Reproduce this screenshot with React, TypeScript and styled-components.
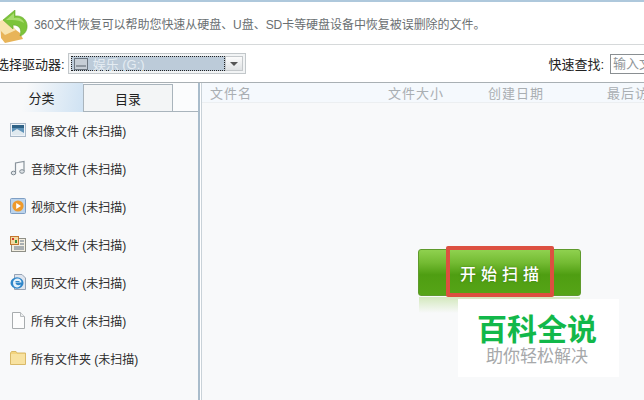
import React from 'react';
import styled, { createGlobalStyle } from 'styled-components';

const GlobalStyle = createGlobalStyle`
    html, body {
        margin: 0;
        padding: 0;
        background: #fff;
        font-family: "Liberation Sans", "Noto Sans CJK SC", sans-serif;
    }
`;

const Page = styled.div`
    position: relative;
    width: 644px;
    height: 400px;
    overflow: hidden;
    display: flex;
    flex-direction: column;
    background: #fff;
    border-top: 2px solid #aec8dc;
    box-sizing: border-box;
`;

const Banner = styled.div`
    height: 42px;
    flex: none;
    display: flex;
    align-items: center;
    gap: 6px;
    border-bottom: 1px solid #d6d9da;
    font-size: 12px;
    letter-spacing: -0.05px;
    color: #6a6f72;
    & > svg {
        align-self: flex-end;
    }
`;

const Toolbar = styled.div`
    height: 37px;
    flex: none;
    display: flex;
    align-items: center;
    margin-left: -4px;
    font-size: 13px;
    color: #222;
    border-bottom: 1px solid #a9b0b4;
`;

const DriveSelect = styled.div`
    width: 178px;
    height: 21px;
    margin-left: 3px;
    display: flex;
    align-items: stretch;
    padding: 2px;
    box-sizing: border-box;
    border: 1px solid #c2c7ca;
    background: #f2f4f5;
`;

const DriveValue = styled.div`
    flex: 1;
    display: flex;
    align-items: center;
    gap: 5px;
    padding-left: 2px;
    border: 1px dotted #222;
    background: #bccbd9;
    color: #e4ecf2;
    font-size: 13px;
`;

const DriveArrow = styled.div`
    width: 18px;
    display: flex;
    align-items: center;
    justify-content: center;
    background: linear-gradient(#fbfbfb, #dfe2e4);
    border: 1px solid #c4c8cb;
    box-sizing: border-box;
    &::after {
        content: '';
        border-left: 4px solid transparent;
        border-right: 4px solid transparent;
        border-top: 4px solid #555;
    }
`;

const SearchLabel = styled.span`
    margin-left: auto;
`;

const SearchInput = styled.div`
    width: 60px;
    height: 20px;
    margin-left: 6px;
    margin-right: -26px;
    padding-left: 2px;
    border: 1px solid #8a8f92;
    box-sizing: border-box;
    color: #8f9598;
    font-size: 13px;
    line-height: 18px;
    white-space: nowrap;
    overflow: hidden;
    flex: none;
`;

const Split = styled.div`
    flex: 1;
    display: flex;
    min-height: 0;
`;

const Sidebar = styled.div`
    width: 198px;
    flex: none;
    display: flex;
    flex-direction: column;
    background: #f8f9fa;
`;

const Tabs = styled.div`
    height: 29px;
    flex: none;
    display: flex;
    align-items: flex-end;
    background: #fbfcfd;
    border-bottom: 1px solid #a9b4bc;
    box-sizing: border-box;
`;

const Tab = styled.div<{ $active?: boolean }>`
    height: ${(p) => (p.$active ? 29 : 27)}px;
    width: ${(p) => (p.$active ? 83 : 90)}px;
    display: flex;
    align-items: center;
    justify-content: center;
    box-sizing: border-box;
    font-size: 13px;
    color: #222;
    margin-bottom: ${(p) => (p.$active ? -1 : 0)}px;
    background: ${(p) => (p.$active ? 'linear-gradient(100deg, #f8f9fa 30%, #cfe2f3 100%)' : '#f3f5f6')};
    border-top: ${(p) => (p.$active ? 'none' : '1px solid #a9b4bc')};
    border-left: ${(p) => (p.$active ? 'none' : '1px solid #a9b4bc')};
    border-right: ${(p) => (p.$active ? 'none' : '1px solid #a9b4bc')};
`;

const CategoryList = styled.ul`
    list-style: none;
    margin: -1px 0 0;
    padding: 0;
`;

const Category = styled.li`
    height: 38px;
    display: flex;
    align-items: center;
    gap: 5px;
    padding-left: 10px;
    font-size: 12px;
    color: #2c2c2c;
    & > svg {
        flex: none;
    }
`;

const Divider = styled.div`
    width: 4px;
    flex: none;
    background: #fff;
    border-left: 2px solid #a9bccb;
    border-right: 1px solid #c9d2d8;
    box-sizing: border-box;
`;

const Main = styled.div`
    width: 595px;
    flex: none;
    display: flex;
    flex-direction: column;
    background: #f8f9fa;
`;

const ColumnHeader = styled.div`
    height: 20px;
    flex: none;
    display: grid;
    grid-template-columns: 178px 100px 119px 90px;
    align-items: center;
    padding: 0 0 2px 8px;
    box-sizing: border-box;
    background: #f5f9fd;
    border-bottom: 1px solid #eceff1;
    color: #a9aeb2;
    font-size: 13px;
    letter-spacing: 1px;
`;

const Column = styled.span`
    white-space: nowrap;
`;

const ScanArea = styled.div`
    flex: 1;
    display: flex;
    justify-content: center;
    padding-top: 146px;
`;

const ScanButton = styled.button`
    position: relative;
    width: 163px;
    height: 47px;
    padding: 0;
    border: 1px solid #5f9a2c;
    border-radius: 3px;
    background: linear-gradient(#8fd14f 0%, #74bb33 28%, #4f9e12 55%, #56a417 100%);
    color: #fff;
    font-family: "Noto Sans CJK SC", serif;
    font-size: 16px;
    font-weight: 500;
    letter-spacing: 5px;
    text-indent: 5px;
    text-shadow: 0 0 2px #3f7a10;
    &::after {
        content: '';
        position: absolute;
        left: 0;
        right: 0;
        top: 47px;
        height: 16px;
        background: linear-gradient(#d3e8bd, #f8f9fa);
    }
`;

const Highlight = styled.div`
    position: absolute;
    top: -4px;
    left: 27px;
    width: 108px;
    height: 51px;
    box-sizing: border-box;
    border: 4px solid #dc5040;
    border-radius: 2px;
`;

const Watermark = styled.div`
    position: absolute;
    left: 458px;
    top: 297px;
    width: 161px;
    height: 78px;
    background: #fff;
    display: flex;
    flex-direction: column;
    align-items: center;
    justify-content: center;
`;

const WatermarkTitle = styled.div`
    font-family: "Noto Sans CJK SC", sans-serif;
    font-weight: 700;
    font-size: 30px;
    line-height: 34px;
    margin-left: -3px;
    color: #12b84a;
`;

const WatermarkSub = styled.div`
    font-family: "Noto Sans CJK SC", sans-serif;
    font-size: 17px;
    line-height: 22px;
    margin-left: -3px;
    color: #a6a8aa;
`;

const LogoIcon = () => (
    <svg width="28" height="34" viewBox="0 0 28 34">
        <path d="M0 11 L12 17 L20 23 L23 29 L5 33 L1 28 Z" fill="#e8b458" />
        <path d="M0 11 L7 8 L16 20 L5 25 L0 20 Z" fill="#f8e4ae" />
        <path d="M3 10 L15 0 V6 C23 5 28 11 27 18 C26 23 23 25 20 26 C22 20 20 15 13 15 V19 Z" fill="#7cc43a" stroke="#66a92c" strokeWidth="0.6" />
        <path d="M6 10 L14 3 V8 C19 7 23 9 24 13 C21 11 17 10 12 10 Z" fill="#a8dc6e" />
    </svg>
);

const ImageIcon = () => (
    <svg width="16" height="14" viewBox="0 0 16 14">
        <rect x="0.5" y="0.5" width="15" height="13" fill="#eef3f8" stroke="#a8b8c8" />
        <rect x="2" y="2" width="12" height="10" fill="#5f93b8" />
        <path d="M2 9 L7 6 L14 10 V12 H2 Z" fill="#dfe9ef" />
        <path d="M2 2 H14 V5 H2 Z" fill="#2e6286" />
    </svg>
);

const MusicIcon = () => (
    <svg width="16" height="16" viewBox="0 0 16 16">
        <path d="M5.5 12.5 V3 L14 1.5 V11" fill="none" stroke="#8a949c" strokeWidth="1.2" />
        <ellipse cx="3.5" cy="13" rx="2.3" ry="1.8" fill="#dfe4e8" stroke="#7f8a92" />
        <ellipse cx="12" cy="11.5" rx="2.3" ry="1.8" fill="#dfe4e8" stroke="#7f8a92" />
    </svg>
);

const VideoIcon = () => (
    <svg width="16" height="16" viewBox="0 0 16 16">
        <rect x="0.5" y="0.5" width="15" height="15" rx="1" fill="#bcd4ec" stroke="#7f9fc4" />
        <circle cx="8" cy="8" r="5.6" fill="#ee9a2c" />
        <path d="M6.2 5 L11 8 L6.2 11 Z" fill="#fff" />
    </svg>
);

const DocIcon = () => (
    <svg width="16" height="16" viewBox="0 0 16 16">
        <rect x="1.5" y="2.5" width="14" height="13" fill="#f3efe2" stroke="#8e8f86" />
        <rect x="0.5" y="0.5" width="8" height="8" fill="#f2d9a0" stroke="#c2762e" />
        <rect x="2" y="2" width="2" height="2" fill="#d2372c" />
        <rect x="5" y="4" width="2" height="3" fill="#3f8f3a" />
        <path d="M10 5 H14 M10 8 H14 M4 11 H14 M4 13 H14" stroke="#5e6f82" strokeWidth="1" />
    </svg>
);

const WebIcon = () => (
    <svg width="16" height="16" viewBox="0 0 16 16">
        <path d="M4.5 0.5 H12 L15.5 4 V15.5 H4.5 Z" fill="#dfe5ee" stroke="#96a3b4" />
        <ellipse cx="7" cy="9" rx="6.5" ry="5.8" fill="#2f86c9" />
        <path d="M3 9 C3 6 5 4.5 7.5 4.5 C10 4.5 11.5 6.5 11.5 8.5 H5.5 C5.5 11 8.5 12 11 10.5 C10 12.5 8.5 13.4 7 13.4 C4.5 13.4 3 11.5 3 9 Z" fill="#e4f1fa" />
        <rect x="5.5" y="7" width="4" height="1" fill="#2f86c9" />
    </svg>
);

const FileIcon = () => (
    <svg width="16" height="17" viewBox="0 0 16 17">
        <path d="M2.5 0.5 H10.5 L14.5 4.5 V16.5 H2.5 Z" fill="#fdfdfd" stroke="#a8acae" />
        <path d="M10.5 0.5 V4.5 H14.5" fill="#eceeef" stroke="#b8bcbe" />
    </svg>
);

const FolderIcon = () => (
    <svg width="16" height="14" viewBox="0 0 16 14">
        <path d="M0.5 2 L1.5 0.5 H6 L7 2 H15.5 V13.5 H0.5 Z" fill="#f3d47e" stroke="#d9b968" />
        <rect x="1" y="3" width="14" height="10" fill="#f8e2a0" />
    </svg>
);

const DriveIcon = () => (
    <svg width="14" height="12" viewBox="0 0 14 12">
        <rect x="0.5" y="0.5" width="13" height="11" fill="#c6ced6" stroke="#6c7680" />
        <path d="M2 8 H12" stroke="#59636c" />
    </svg>
);

const categories = [
    { icon: <ImageIcon />, label: '图像文件 (未扫描)' },
    { icon: <MusicIcon />, label: '音频文件 (未扫描)' },
    { icon: <VideoIcon />, label: '视频文件 (未扫描)' },
    { icon: <DocIcon />, label: '文档文件 (未扫描)' },
    { icon: <WebIcon />, label: '网页文件 (未扫描)' },
    { icon: <FileIcon />, label: '所有文件 (未扫描)' },
    { icon: <FolderIcon />, label: '所有文件夹 (未扫描)' },
];

const App = () => {
    return (
        <Page>
            <GlobalStyle />
            <Banner>
                <LogoIcon />
                360文件恢复可以帮助您快速从硬盘、U盘、SD卡等硬盘设备中恢复被误删除的文件。
            </Banner>
            <Toolbar>
                选择驱动器:
                <DriveSelect>
                    <DriveValue>
                        <DriveIcon />
                        娱乐 (G:)
                    </DriveValue>
                    <DriveArrow />
                </DriveSelect>
                <SearchLabel>快速查找:</SearchLabel>
                <SearchInput>输入文件名</SearchInput>
            </Toolbar>
            <Split>
                <Sidebar>
                    <Tabs>
                        <Tab $active>分类</Tab>
                        <Tab>目录</Tab>
                    </Tabs>
                    <CategoryList>
                        {categories.map((item) => (
                            <Category key={item.label}>
                                {item.icon}
                                {item.label}
                            </Category>
                        ))}
                    </CategoryList>
                </Sidebar>
                <Divider />
                <Main>
                    <ColumnHeader>
                        <Column>文件名</Column>
                        <Column>文件大小</Column>
                        <Column>创建日期</Column>
                        <Column>最后访问</Column>
                    </ColumnHeader>
                    <ScanArea>
                        <ScanButton>
                            开始扫描
                            <Highlight />
                        </ScanButton>
                    </ScanArea>
                </Main>
            </Split>
            <Watermark>
                <WatermarkTitle>百科全说</WatermarkTitle>
                <WatermarkSub>助你轻松解决</WatermarkSub>
            </Watermark>
        </Page>
    );
};

export default App;
